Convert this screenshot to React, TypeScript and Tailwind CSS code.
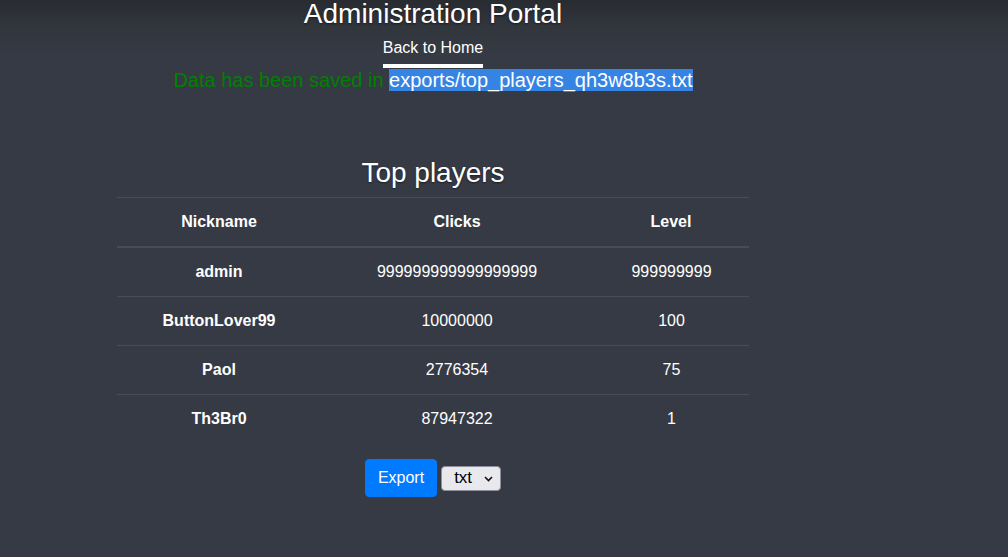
import React from 'react';

const players = [
  { nick: 'admin', clicks: '999999999999999999', level: '999999999' },
  { nick: 'ButtonLover99', clicks: '10000000', level: '100' },
  { nick: 'Paol', clicks: '2776354', level: '75' },
  { nick: 'Th3Br0', clicks: '87947322', level: '1' },
];

export default function App() {
  return (
    <div className="min-h-[557px] w-full bg-[linear-gradient(to_bottom,#282c31_0px,#31353c_25px,#363a44_55px,#363a44_100%)] font-['Liberation_Sans',Arial,sans-serif] text-white">
      <div className="ml-[117px] flex w-[632px] flex-col items-center">
        <h3 className="text-[28px] leading-[28px] [text-shadow:0_1px_2px_rgba(0,0,0,0.5)]">
          Administration Portal
        </h3>
        <nav className="mt-[2px]">
          <a href="#" className="block border-b-4 border-white pt-[6px] pb-[4px] text-base leading-6 text-white">
            Back to Home
          </a>
        </nav>
        <p className="text-[20px] leading-6 text-[#008000]">
          Data has been saved in <span className="bg-[#3584e4] text-white">exports/top_players_qh3w8b3s.txt</span>
        </p>

        <h2 className="mt-[64px] mb-[7px] text-[28px] leading-[34px] [text-shadow:0_1px_2px_rgba(0,0,0,0.5)]">
          Top players
        </h2>

        <table className="w-full table-fixed border-collapse text-center text-base leading-6">
          <thead>
            <tr className="border-t border-b-2 border-[#454d55]">
              <th className="w-[204px] p-3 font-bold">Nickname</th>
              <th className="w-[272px] p-3 font-bold">Clicks</th>
              <th className="w-[156px] p-3 font-bold">Level</th>
            </tr>
          </thead>
          <tbody>
            {players.map((p, i) => (
              <tr key={p.nick} className={i > 0 ? 'border-t border-[#454d55]' : ''}>
                <th className="p-3 font-bold">{p.nick}</th>
                <td className="p-3">{p.clicks}</td>
                <td className="p-3 pl-[13px]">{p.level}</td>
              </tr>
            ))}
          </tbody>
        </table>

        <div className="mt-4 flex items-center gap-1">
          <button className="rounded-[4px] border border-[#007bff] bg-[#007bff] px-3 py-[6px] text-base leading-6 text-white">
            Export
          </button>
          <div className="relative">
            <select className="h-[25px] w-[60px] appearance-none rounded-[4px] border border-[#8f8f9d] bg-[#e9e9ed] pl-3 text-[17px] leading-5 text-black">
              <option>txt</option>
            </select>
            <svg className="pointer-events-none absolute right-[8px] top-[10px]" width="9" height="6" viewBox="0 0 9 6">
              <path d="M1 1l3.5 3.5L8 1" fill="none" stroke="#111" strokeWidth="1.6" />
            </svg>
          </div>
        </div>
      </div>
    </div>
  );
}
